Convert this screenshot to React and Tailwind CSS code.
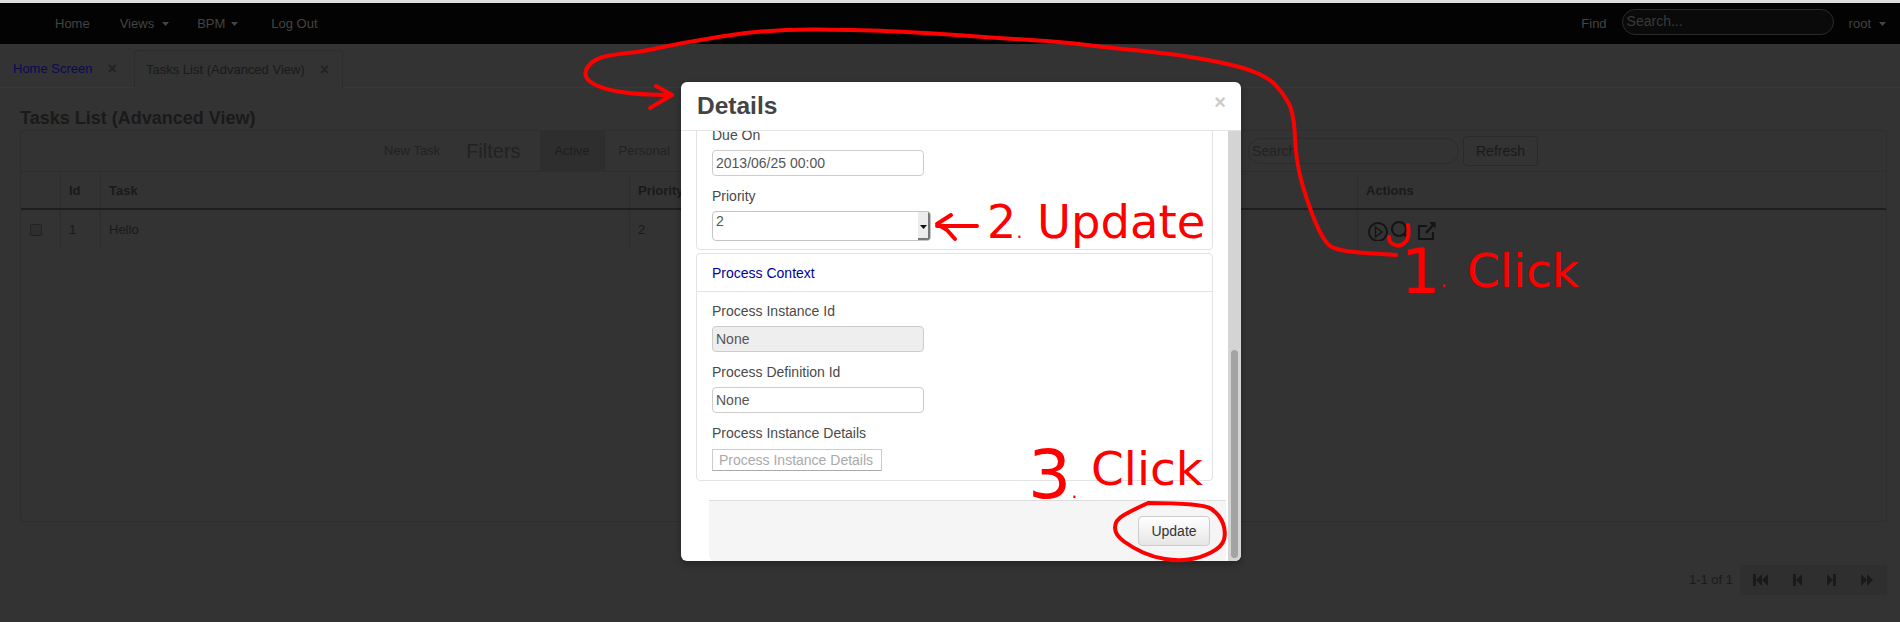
const smooth = (pts) => {
  let d = `M${pts[0][0]} ${pts[0][1]}`;
  for (let i = 1; i < pts.length - 1; i++) {
    const mx = (pts[i][0] + pts[i + 1][0]) / 2;
    const my = (pts[i][1] + pts[i + 1][1]) / 2;
    d += ` Q${pts[i][0]} ${pts[i][1]} ${mx} ${my}`;
  }
  const last = pts[pts.length - 1];
  return d + ` L${last[0]} ${last[1]}`;
};

const longCurve = [
  [672, 95], [638, 95], [598, 88], [582, 75], [594, 58], [625, 53], [640, 52], [686, 42], [770, 29],
  [866, 30], [929, 33], [998, 38], [1063, 42], [1111, 48], [1176, 54], [1240, 66], [1269, 78],
  [1283, 93], [1294, 113], [1296, 163], [1309, 207], [1323, 240], [1336, 251], [1396, 255],
];
const updateRing = [
  [1148, 503], [1203, 503], [1220, 515], [1226, 532], [1222, 547], [1200, 558], [1177, 561],
  [1153, 557], [1133, 548], [1115, 535], [1115, 520], [1133, 510], [1148, 503],
];
const searchLoop = [[1408, 225], [1410, 238], [1400, 247], [1390, 243], [1389, 237]];

function Caret({ className }) {
  return (
    <svg width="7" height="4" viewBox="0 0 7 4" className={className}>
      <path d="M0 0h7L3.5 4z" fill="#444" />
    </svg>
  );
}

function Field({ value, disabled }) {
  return (
    <input
      readOnly
      value={value}
      className={`block w-[212px] h-[26px] px-[3px] border border-[#ccc] rounded-[4px] text-[14px] text-[#555] outline-none ${disabled ? "bg-[#eee]" : "bg-white"}`}
    />
  );
}

function Label({ children, className = "" }) {
  return <div className={`h-[20px] leading-[20px] text-[14px] text-[#4a4a4a] ${className}`}>{children}</div>;
}

const Cell = ({ children, className = "" }) => (
  <div className={`pl-[8px] flex items-center border-l border-[#2c2c2c] first:border-l-0 ${className}`}>{children}</div>
);

function ActionIcons() {
  return (
    <svg width="74" height="22" viewBox="0 0 74 22" className="-ml-[2px]">
      <g fill="none" stroke="#141414" strokeWidth="2">
        <circle cx="14" cy="13" r="9" />
        <path d="M11.5 8l6.5 5-6.5 5z" strokeWidth="1.4" />
        <circle cx="35" cy="10" r="7" />
        <path d="M40 15l4 4" strokeWidth="2.5" />
        <path d="M69 13v7H55V7h8" strokeWidth="2.2" />
        <path d="M62 14l7-8" strokeWidth="2.6" />
      </g>
      <path d="M65 3h6.5v6.5z" fill="#141414" />
    </svg>
  );
}

function Pager() {
  return (
    <div className="flex items-center w-[147px] h-[30px] bg-[#2f2f2f]">
      <svg width="147" height="30" viewBox="0 0 147 30" fill="#1a1a1a">
        <path d="M13 9h3v12h-3zM16 15l6-6v12zM22 15l6-6v12z" />
        <path d="M53 9h3v12h-3zM56 15l6-6v12z" />
        <path d="M87 9l6 6-6 6zM93 9h3v12h-3z" />
        <path d="M121 9l6 6-6 6zM127 9l6 6-6 6z" />
      </svg>
    </div>
  );
}

function Modal() {
  return (
    <div className="absolute left-[681px] top-[82px] w-[560px] h-[479px] flex flex-col bg-white rounded-[6px] overflow-hidden shadow-[0_3px_7px_rgba(0,0,0,0.3)]">
      <div className="h-[49px] shrink-0 flex items-start justify-between pl-[16px] pr-[15px] border-b border-[#e5e5e5]">
        <h3 className="mt-[9px] text-[24.5px] leading-[30px] font-bold text-[#444]">Details</h3>
        <span className="mt-[8px] text-[20px] leading-[24px] font-bold text-[#ccc]">×</span>
      </div>
      <div className="flex flex-1 min-h-0">
        <div className="w-[547px] overflow-hidden">
          <div className="mx-[15px] -mt-[7px] h-[126px] px-[15px] pt-0 border border-[#e3e3e3] rounded-[4px]">
            <Label>Due On</Label>
            <div className="mt-[5px]"><Field value="2013/06/25 00:00" /></div>
            <Label className="mt-[10px]">Priority</Label>
            <div className="mt-[5px] flex w-[219px] h-[30px] border border-[#c4c4c4] rounded-[4px] overflow-hidden">
              <span className="flex-1 pl-[3px] text-[14px] leading-[18px] text-[#555]">2</span>
              <span className="w-[12px] flex items-center justify-center bg-[#ececec] border-r-[2px] border-b-[2px] border-[#777]">
                <svg width="7" height="4" viewBox="0 0 7 4" className="mt-[3px]"><path d="M0 0h7L3.5 4z" fill="#111" /></svg>
              </span>
            </div>
          </div>
          <div className="mx-[15px] mt-[3px] h-[228px] border border-[#e3e3e3] rounded-[4px]">
            <div className="h-[38px] px-[15px] pt-[2px] flex items-center border-b border-[#e3e3e3] text-[14px] text-[#00009c]">
              Process Context
            </div>
            <div className="px-[15px] pt-[9px]">
              <Label>Process Instance Id</Label>
              <div className="mt-[5px]"><Field value="None" disabled /></div>
              <Label className="mt-[10px]">Process Definition Id</Label>
              <div className="mt-[5px]"><Field value="None" /></div>
              <Label className="mt-[10px]">Process Instance Details</Label>
              <div className="mt-[6px] w-[170px] h-[22px] pl-[6px] border border-[#ccc] border-b-[#aaa] text-[14px] leading-[20px] text-[#aaa] whitespace-nowrap">
                Process Instance Details
              </div>
            </div>
          </div>
          <div className="ml-[28px] mr-[2px] mt-[19px] h-[61px] flex justify-end pt-[15px] pr-[16px] bg-[#f5f5f5] border-t border-[#ddd] rounded-bl-[6px]">
            <button className="w-[72px] h-[30px] border border-[#ccc] rounded-[4px] bg-gradient-to-b from-white to-[#e6e6e6] text-[14px] text-[#333]">
              Update
            </button>
          </div>
        </div>
        <div className="w-[13px] bg-[#d4d4d4] pt-[219px] pb-[3px] flex justify-center">
          <div className="w-[7px] h-full rounded-full bg-[#a3a3a3]" />
        </div>
      </div>
    </div>
  );
}

function Annotations() {
  const note = "absolute font-['DejaVu_Sans',sans-serif] text-[#ff0000] whitespace-nowrap";
  return (
    <>
      <svg width="1900" height="622" viewBox="0 0 1900 622" className="absolute inset-0 pointer-events-none">
        <g fill="none" stroke="#ff0000" strokeWidth="4" strokeLinecap="round" strokeLinejoin="round">
          <path d={smooth(longCurve)} />
          <path d="M656 86l16 9-22 13" />
          <path d={smooth(updateRing)} />
          <path d={smooth(searchLoop)} />
          <path d="M977 226H937M951 215l-14 9 10 6 8 9" />
        </g>
      </svg>
      <span className={`${note} left-[987px] top-[199px] text-[46px] leading-[46px]`}>2<span className="text-[20px]">.</span></span>
      <span className={`${note} left-[1037px] top-[200px] text-[46.5px] leading-[45px]`}>Update</span>
      <span className={`${note} left-[1401px] top-[241px] text-[62px] leading-[62px]`}>1<span className="text-[20px] relative -top-[6px]">.</span></span>
      <span className={`${note} left-[1467px] top-[248px] text-[47px] leading-[46px]`}>Click</span>
      <span className={`${note} left-[1028px] top-[441px] text-[68px] leading-[68px]`}>3<span className="text-[20px]">.</span></span>
      <span className={`${note} left-[1091px] top-[446px] text-[47px] leading-[46px]`}>Click</span>
    </>
  );
}

export default function App() {
  return (
    <div className="relative w-[1900px] h-[622px] overflow-hidden bg-[#333] font-['Liberation_Sans',Arial,sans-serif] text-[13px] text-[#1a1a1a]">
      <div className="h-[3px] bg-[#ddd]" />

      {/* Navbar */}
      <nav className="h-[41px] bg-[#030303] flex items-center text-[13px] text-[#444]">
        <span className="ml-[55px]">Home</span>
        <span className="ml-[30px]">Views</span>
        <Caret className="ml-[8px]" />
        <span className="ml-[28px]">BPM</span>
        <Caret className="ml-[6px]" />
        <span className="ml-[33px]">Log Out</span>
        <span className="ml-auto">Find</span>
        <div className="ml-[15px] w-[212px] h-[26px] -mt-[4px] pl-[4px] rounded-full border border-[#2a2a2a] bg-[#0a0a0a] text-[#3a3a3a] leading-[22px] text-[14px]">
          Search...
        </div>
        <span className="ml-[15px]">root</span>
        <Caret className="ml-[8px] mr-[14px]" />
      </nav>

      {/* Tabs */}
      <div className="h-[44px] flex items-end pl-[13px] border-b border-[#2a3b4a]">
        <div className="h-[37px] flex items-center w-[121px] text-[#0a0a52]">
          Home Screen
          <span className="ml-[15px] text-[16px] font-bold text-[#222]">×</span>
        </div>
        <div className="h-[38px] -mb-px w-[209px] pl-[11px] flex items-center bg-[#333] border border-b-0 border-[#2d2d2d] rounded-t-[4px] text-[#1a1a1a]">
          Tasks List (Advanced View)
          <span className="ml-[15px] text-[16px] font-bold text-[#222]">×</span>
        </div>
      </div>

      {/* Content */}
      <main className="pl-[20px] pr-[13px]">
        <h2 className="mt-[18px] text-[18px] leading-[24px] font-bold text-[#1a1a1a]">Tasks List (Advanced View)</h2>

        <div className="border border-[#2e2e2e] rounded-[4px] h-[392px]">
          <div className="h-[41px] flex items-center pl-[363px] border-b border-[#2e2e2e]">
            <span className="text-[#222]">New Task</span>
            <span className="ml-[26px] text-[20px] text-[#222]">Filters</span>
            <span className="ml-[19px] w-[65px] h-[40px] flex items-center justify-center bg-[#2e2e2e] text-[#1e1e1e]">Active</span>
            <span className="ml-[14px] text-[#222]">Personal</span>
            <div className="ml-auto w-[211px] h-[26px] pl-[3px] rounded-full border border-[#2c2c2c] text-[14px] leading-[24px] text-[#222]">
              Search
            </div>
            <button className="ml-[4px] mr-[348px] w-[75px] h-[30px] border border-[#2a2a2a] rounded-[4px] text-[14px] text-[#1a1a1a]">
              Refresh
            </button>
          </div>
          <div className="grid grid-cols-[39px_40px_529px_728px_1fr] h-[38px] pt-[2px] border-b-[2px] border-[#1e1e1e] font-bold">
            <Cell />
            <Cell>Id</Cell>
            <Cell>Task</Cell>
            <Cell>Priority</Cell>
            <Cell>Actions</Cell>
          </div>
          <div className="grid grid-cols-[39px_40px_529px_728px_1fr] h-[39px]">
            <Cell>
              <span className="w-[12px] h-[12px] ml-[1px] rounded-[2px] border border-[#222] bg-[#2e2e2e]" />
            </Cell>
            <Cell>1</Cell>
            <Cell>Hello</Cell>
            <Cell>2</Cell>
            <Cell><ActionIcons /></Cell>
          </div>
        </div>

        <div className="mt-[43px] flex items-center justify-end gap-[7px]">
          <span className="text-[13px]">1-1 of 1</span>
          <Pager />
        </div>
      </main>

      <Modal />
      <Annotations />
    </div>
  );
}
